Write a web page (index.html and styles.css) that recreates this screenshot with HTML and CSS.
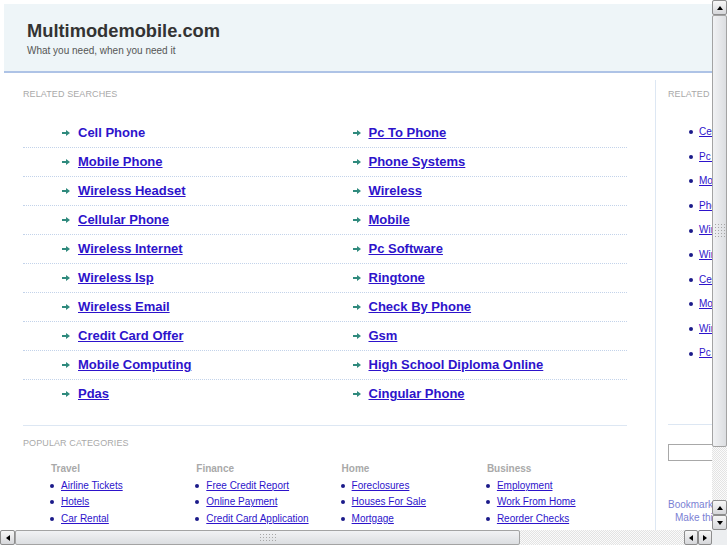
FILE: index.html
```html
<!DOCTYPE html>
<html lang="en">
<head>
  <meta charset="UTF-8">
  <title>Multimodemobile.com</title>
  <link rel="stylesheet" href="styles.css">
</head>
<body>
  <div class="frame">
    <div class="viewport">
      <div class="page">
        <div class="header">
          <h1>Multimodemobile.com</h1>
          <p class="tagline">What you need, when you need it</p>
        </div>

        <div class="content">
          <div class="main">
            <div class="label">Related Searches</div>
            <div class="searches">
              <div class="row">
                <div class="cell"><svg class="arrow" viewBox="0 0 8 6"><path d="M0 2h4V0l4 3-4 3V4H0z"/></svg><a href="#" class="hover">Cell Phone</a></div>
                <div class="cell"><svg class="arrow" viewBox="0 0 8 6"><path d="M0 2h4V0l4 3-4 3V4H0z"/></svg><a href="#">Pc To Phone</a></div>
              </div>
              <div class="row">
                <div class="cell"><svg class="arrow" viewBox="0 0 8 6"><path d="M0 2h4V0l4 3-4 3V4H0z"/></svg><a href="#">Mobile Phone</a></div>
                <div class="cell"><svg class="arrow" viewBox="0 0 8 6"><path d="M0 2h4V0l4 3-4 3V4H0z"/></svg><a href="#">Phone Systems</a></div>
              </div>
              <div class="row">
                <div class="cell"><svg class="arrow" viewBox="0 0 8 6"><path d="M0 2h4V0l4 3-4 3V4H0z"/></svg><a href="#">Wireless Headset</a></div>
                <div class="cell"><svg class="arrow" viewBox="0 0 8 6"><path d="M0 2h4V0l4 3-4 3V4H0z"/></svg><a href="#">Wireless</a></div>
              </div>
              <div class="row">
                <div class="cell"><svg class="arrow" viewBox="0 0 8 6"><path d="M0 2h4V0l4 3-4 3V4H0z"/></svg><a href="#">Cellular Phone</a></div>
                <div class="cell"><svg class="arrow" viewBox="0 0 8 6"><path d="M0 2h4V0l4 3-4 3V4H0z"/></svg><a href="#">Mobile</a></div>
              </div>
              <div class="row">
                <div class="cell"><svg class="arrow" viewBox="0 0 8 6"><path d="M0 2h4V0l4 3-4 3V4H0z"/></svg><a href="#">Wireless Internet</a></div>
                <div class="cell"><svg class="arrow" viewBox="0 0 8 6"><path d="M0 2h4V0l4 3-4 3V4H0z"/></svg><a href="#">Pc Software</a></div>
              </div>
              <div class="row">
                <div class="cell"><svg class="arrow" viewBox="0 0 8 6"><path d="M0 2h4V0l4 3-4 3V4H0z"/></svg><a href="#">Wireless Isp</a></div>
                <div class="cell"><svg class="arrow" viewBox="0 0 8 6"><path d="M0 2h4V0l4 3-4 3V4H0z"/></svg><a href="#">Ringtone</a></div>
              </div>
              <div class="row">
                <div class="cell"><svg class="arrow" viewBox="0 0 8 6"><path d="M0 2h4V0l4 3-4 3V4H0z"/></svg><a href="#">Wireless Email</a></div>
                <div class="cell"><svg class="arrow" viewBox="0 0 8 6"><path d="M0 2h4V0l4 3-4 3V4H0z"/></svg><a href="#">Check By Phone</a></div>
              </div>
              <div class="row">
                <div class="cell"><svg class="arrow" viewBox="0 0 8 6"><path d="M0 2h4V0l4 3-4 3V4H0z"/></svg><a href="#">Credit Card Offer</a></div>
                <div class="cell"><svg class="arrow" viewBox="0 0 8 6"><path d="M0 2h4V0l4 3-4 3V4H0z"/></svg><a href="#">Gsm</a></div>
              </div>
              <div class="row">
                <div class="cell"><svg class="arrow" viewBox="0 0 8 6"><path d="M0 2h4V0l4 3-4 3V4H0z"/></svg><a href="#">Mobile Computing</a></div>
                <div class="cell"><svg class="arrow" viewBox="0 0 8 6"><path d="M0 2h4V0l4 3-4 3V4H0z"/></svg><a href="#">High School Diploma Online</a></div>
              </div>
              <div class="row">
                <div class="cell"><svg class="arrow" viewBox="0 0 8 6"><path d="M0 2h4V0l4 3-4 3V4H0z"/></svg><a href="#">Pdas</a></div>
                <div class="cell"><svg class="arrow" viewBox="0 0 8 6"><path d="M0 2h4V0l4 3-4 3V4H0z"/></svg><a href="#">Cingular Phone</a></div>
              </div>
            </div>

            <div class="popular">
              <div class="label">Popular Categories</div>
              <div class="categories">
                <div class="category">
                  <h3>Travel</h3>
                  <ul>
                    <li><a href="#">Airline Tickets</a></li>
                    <li><a href="#">Hotels</a></li>
                    <li><a href="#">Car Rental</a></li>
                  </ul>
                </div>
                <div class="category">
                  <h3>Finance</h3>
                  <ul>
                    <li><a href="#">Free Credit Report</a></li>
                    <li><a href="#">Online Payment</a></li>
                    <li><a href="#">Credit Card Application</a></li>
                  </ul>
                </div>
                <div class="category">
                  <h3>Home</h3>
                  <ul>
                    <li><a href="#">Foreclosures</a></li>
                    <li><a href="#">Houses For Sale</a></li>
                    <li><a href="#">Mortgage</a></li>
                  </ul>
                </div>
                <div class="category">
                  <h3>Business</h3>
                  <ul>
                    <li><a href="#">Employment</a></li>
                    <li><a href="#">Work From Home</a></li>
                    <li><a href="#">Reorder Checks</a></li>
                  </ul>
                </div>
              </div>
            </div>
          </div>

          <div class="side">
            <div class="label">Related Searches</div>
            <ul class="side-links">
              <li><a href="#">Cell Phone</a></li>
              <li><a href="#">Pc To Phone</a></li>
              <li><a href="#">Mobile Phone</a></li>
              <li><a href="#">Phone Systems</a></li>
              <li><a href="#">Wireless Headset</a></li>
              <li><a href="#">Wireless</a></li>
              <li><a href="#">Cellular Phone</a></li>
              <li><a href="#">Mobile</a></li>
              <li><a href="#">Wireless Internet</a></li>
              <li><a href="#">Pc Software</a></li>
            </ul>
            <div class="side-search">
              <input type="text" class="search-box">
            </div>
            <div class="tools">
              <a href="#">Bookmark this page</a>
              <a href="#" class="indent">Make this your homepage</a>
            </div>
          </div>
        </div>
      </div>
    </div>

    <!-- fake window scrollbars -->
    <div class="vbar">
      <div class="sb-btn"><span class="tri up"></span></div>
      <div class="vthumb"><span class="grip"></span></div>
      <div class="sb-track"></div>
      <div class="sb-btn"><span class="tri up"></span></div>
      <div class="sb-btn"><span class="tri down"></span></div>
    </div>
    <div class="hbar">
      <div class="sb-btn"><span class="tri left"></span></div>
      <div class="hthumb"><span class="grip"></span></div>
      <div class="sb-track"></div>
      <div class="sb-btn"><span class="tri left"></span></div>
      <div class="sb-btn"><span class="tri right"></span></div>
    </div>
    <div class="corner"></div>
  </div>
</body>
</html>
```

FILE: styles.css
```css
:root {
  --link: #2d13cb;
  --muted: #a9a9a9;
  --rule: #dde7f3;
  --dots: #c3d3ea;
  --header-bg: #eef5f8;
  --header-line: #aec3e6;
}

body {
  margin: 0;
  overflow: hidden;
  font-family: 'Liberation Sans', Arial, sans-serif;
  background: #fff;
}

.frame {
  width: 727px;
  height: 545px;
  display: grid;
  grid-template-columns: 712px 15px;
  grid-template-rows: 530px 15px;
}

.viewport {
  overflow: hidden;
}

.page {
  width: 940px;
  padding: 4px 0 0 4px;
}

/* header */

.header {
  height: 69px;
  box-sizing: border-box;
  background: var(--header-bg);
  border-bottom: 2px solid var(--header-line);
  padding: 16px 0 0 23px;
}

.header h1 {
  margin: 0;
  font-size: 18.3px;
  line-height: 21px;
  font-weight: 700;
  color: #333;
}

.tagline {
  margin: 4px 0 0;
  font-size: 10px;
  line-height: 12px;
  color: #555;
}

/* content */

.content {
  display: flex;
  padding: 7px 0 0 19px;
}

.main {
  width: 604px;
  flex-shrink: 0;
}

.label {
  margin-top: 9px;
  font-size: 9px;
  line-height: 11px;
  letter-spacing: 0.1px;
  text-transform: uppercase;
  color: var(--muted);
}

a {
  color: var(--link);
}

.searches {
  margin-top: 19px;
}

.row {
  display: flex;
  padding-left: 39px;
  border-bottom: 1px dotted var(--dots);
}

.row:last-child {
  border-bottom: none;
}

.cell {
  width: 290.5px;
  flex-shrink: 0;
  display: flex;
  align-items: center;
  height: 28px;
}

.cell a {
  font-size: 13px;
  font-weight: 700;
  line-height: 28px;
  white-space: nowrap;
}

.cell a.hover {
  text-decoration: none;
}

.arrow {
  width: 8px;
  height: 6px;
  margin-right: 8px;
  fill: #2f8a7d;
  flex-shrink: 0;
}

.popular {
  margin-top: 17px;
  border-top: 1px solid var(--rule);
}

.popular .label {
  margin-top: 12px;
}

.categories {
  display: flex;
  padding-left: 28px;
  margin-top: 14px;
}

.category {
  width: 145.3px;
  flex-shrink: 0;
}

.category h3 {
  margin: 0;
  font-size: 10px;
  line-height: 12px;
  color: var(--muted);
}

.category ul,
.side-links {
  list-style: none;
  margin: 3px 0 0;
  padding: 0;
}

.category li,
.side-links li {
  display: flex;
  align-items: center;
  font-size: 10px;
  line-height: 16.3px;
  white-space: nowrap;
}

.category li::before,
.side-links li::before {
  content: "";
  width: 4px;
  height: 4px;
  border-radius: 50%;
  background: #1b1a8a;
  margin-right: 6px;
  flex-shrink: 0;
}

.category li::before {
  margin-left: -1px;
  margin-right: 7px;
}

/* sidebar */

.side {
  margin-left: 28px;
  padding-left: 12px;
  border-left: 1px solid var(--rule);
  width: 260px;
  min-height: 470px;
}

.side-links {
  margin-top: 20px;
  padding-left: 21px;
}

.side-links li {
  line-height: 24.6px;
}

.side-search {
  margin-top: 58px;
  border-top: 1px solid var(--rule);
  padding-top: 19px;
}

.search-box {
  display: block;
  width: 200px;
  height: 17px;
  box-sizing: border-box;
  border: 1px solid #a8a8a8;
  margin: 0;
}

.tools {
  margin-top: 37px;
  font-size: 10px;
  line-height: 13.3px;
}

.tools a {
  display: block;
  color: #7b7fd4;
  text-decoration: none;
  white-space: nowrap;
}

.tools a.indent {
  padding-left: 7px;
}

/* scrollbars */

.vbar,
.hbar {
  display: flex;
  background: #eceef0;
}

.vbar {
  flex-direction: column;
}

.sb-btn {
  width: 15px;
  height: 15px;
  box-sizing: border-box;
  border: 1px solid #8d8d8d;
  border-radius: 2px;
  background: linear-gradient(#f7f7f7, #d6d7da);
  display: flex;
  align-items: center;
  justify-content: center;
  flex-shrink: 0;
}

.hbar .sb-btn:nth-last-child(-n+2) {
  width: 14px;
}

.tri {
  width: 0;
  height: 0;
}

.tri.up {
  border-left: 3px solid transparent;
  border-right: 3px solid transparent;
  border-bottom: 4px solid #000;
}

.tri.down {
  border-left: 3px solid transparent;
  border-right: 3px solid transparent;
  border-top: 4px solid #000;
}

.tri.left {
  border-top: 3px solid transparent;
  border-bottom: 3px solid transparent;
  border-right: 4px solid #000;
}

.tri.right {
  border-top: 3px solid transparent;
  border-bottom: 3px solid transparent;
  border-left: 4px solid #000;
}

.vthumb,
.hthumb {
  box-sizing: border-box;
  border: 1px solid #a3a3a3;
  border-radius: 2px;
  display: flex;
  align-items: center;
  justify-content: center;
  flex-shrink: 0;
}

.vthumb {
  height: 432px;
  background: linear-gradient(90deg, #f1f2f4, #dcdee1);
}

.hthumb {
  width: 505px;
  background: linear-gradient(#f1f2f4, #dcdee1);
}

.grip {
  background-image: radial-gradient(circle, #a6a6a6 0.7px, transparent 1px);
  background-size: 3px 3px;
}

.vthumb .grip {
  width: 11px;
  height: 16px;
}

.hthumb .grip {
  width: 18px;
  height: 9px;
}

.sb-track {
  flex: 1;
  background: repeating-conic-gradient(#e3e3e3 0 25%, #fbfbfb 0 50%) 0 0 / 2px 2px;
}

.corner {
  background: #eceef0;
}
```
